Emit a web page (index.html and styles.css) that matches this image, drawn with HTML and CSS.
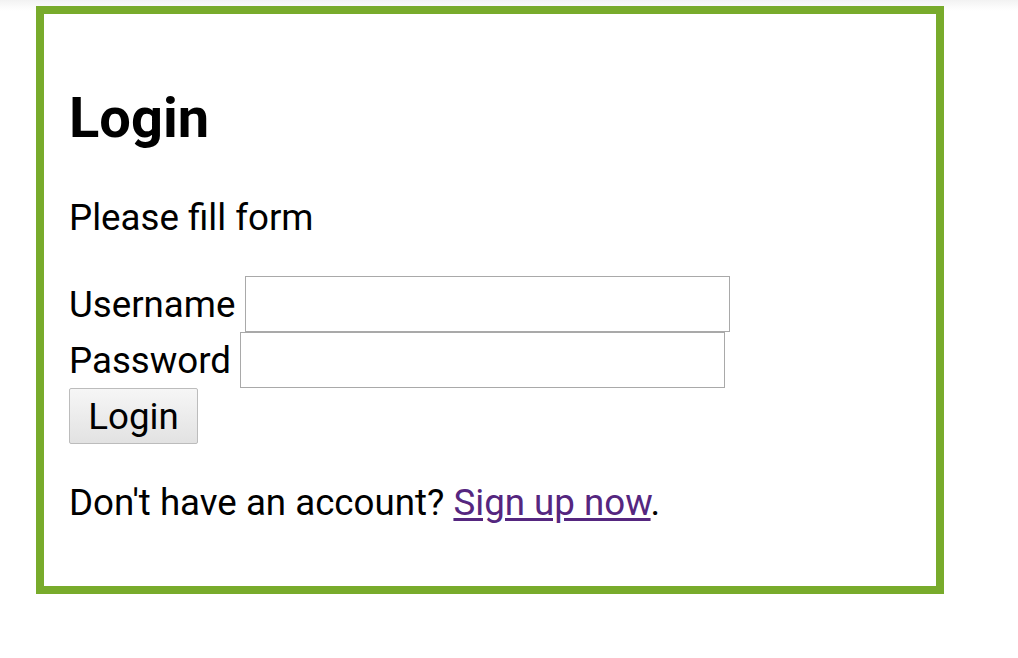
FILE: index.html
```html
<!DOCTYPE html>
<html lang="en">
<head>
<meta charset="utf-8">
<title>Login</title>
<link rel="stylesheet" href="styles.css">
</head>
<body>
<div class="page">
  <div class="box">
    <h2 class="title">Login</h2>
    <p class="intro">Please fill form</p>
    <form class="form">
      <div class="row"><label class="label" for="u">Username</label> <input class="field" id="u" type="text"></div>
      <div class="row"><label class="label" for="p">Password</label> <input class="field" id="p" type="password"></div>
      <div class="row"><button class="btn" type="button">Login</button></div>
    </form>
    <p class="signup">Don't have an account? <a class="link" href="#">Sign up now</a>.</p>
  </div>
</div>
</body>
</html>
```

FILE: styles.css
```css
html, body {
  margin: 0;
  padding: 0;
}
body {
  background: linear-gradient(#f2f2f2 0, #fbfbfb 7px, #ffffff 11px) no-repeat;
  background-size: 100% 12px;
  background-color: #fff;
  font-family: Roboto, "Noto Sans", sans-serif;
  color: #000;
}
.page {
  padding: 6px 0 0 36px;
}
.box {
  box-sizing: border-box;
  width: 908px;
  height: 588px;
  border: 8px solid #78ab2b;
  background: #fff;
  padding: 0 25px;
}
.title {
  font-size: 56px;
  font-weight: 700;
  line-height: normal;
  margin: 71px 0 0;
}
.intro {
  font-size: 36.7px;
  line-height: normal;
  margin: 45px 0 0;
}
.form {
  margin: 37px 0 0;
  font-size: 36.7px;
}
.row {
  line-height: normal;
  height: 56px;
}
.label {
  font-size: 36.7px;
}
.field {
  box-sizing: border-box;
  width: 485px;
  height: 56px;
  font: inherit;
  border: 1px solid #a9a9a9;
  border-radius: 0;
  padding: 0 4px;
  margin: 0;
  background: #fff;
}
.btn {
  box-sizing: border-box;
  width: 129px;
  height: 56px;
  font: inherit;
  color: #000;
  padding: 0;
  margin: 0;
  border: 1px solid #bcbcbc;
  border-radius: 2px;
  background: linear-gradient(#f6f6f6, #e2e2e2);
}
.signup {
  font-size: 36.7px;
  line-height: normal;
  margin: 37px 0 0;
}
.link {
  color: #55267f;
  text-decoration: underline;
  text-underline-offset: 3px;
}
```
